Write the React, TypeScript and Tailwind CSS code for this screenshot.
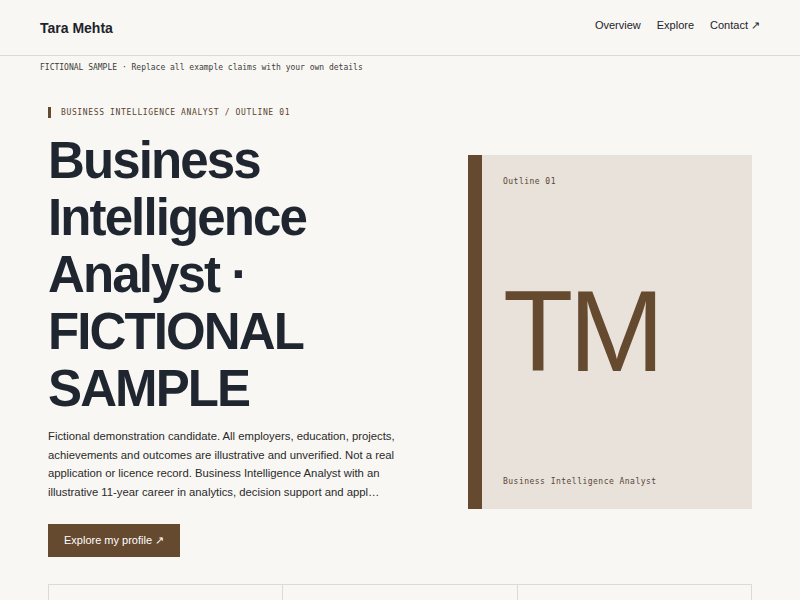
// Profil fictif — hero avec titre, carte monogramme et grille de repères.
const sans = 'font-["Liberation_Sans",Arial,sans-serif]'
const mono = 'font-["DejaVu_Sans_Mono","Liberation_Mono",monospace]'

function Header() {
  return (
    <header className="flex h-[56px] items-center justify-between border-b border-[#dcdad4] px-10 pb-[4px]">
      <span className="mt-[6px] text-[14px] font-bold text-[#1d232b]">Tara Mehta</span>
      <nav className="flex items-center gap-4 text-[11px] text-[#1d232b]">
        <a>Overview</a>
        <a>Explore</a>
        <a>Contact ↗</a>
      </nav>
    </header>
  )
}

function MonogramCard() {
  return (
    <div className="flex h-[354px] border-l-[14px] border-[#654a30] bg-[#e8e2db] pt-[22px] pb-[22px] pl-[21px]">
      <div className="flex flex-1 flex-col justify-between">
        <p className={`${mono} text-[8px] leading-[10px] tracking-[0.06em] text-[#5a4634]`}>Outline 01</p>
        <p className="text-[115px] leading-none tracking-[-0.04em] text-[#654a30]">TM</p>
        <p className={`${mono} text-[8px] leading-[10px] tracking-[0.06em] text-[#5a4634]`}>
          Business Intelligence Analyst
        </p>
      </div>
    </div>
  )
}

export default function App() {
  return (
    <div className={`min-h-screen bg-[#f8f7f3] ${sans}`}>
      <Header />
      <p className={`${mono} px-10 pt-[7px] text-[8px] leading-[10px] text-[#3c3c3c]`}>
        FICTIONAL SAMPLE · Replace all example claims with your own details
      </p>

      <main className="px-12 pt-[34px]">
        <section className="grid grid-cols-[372px_284px] items-center gap-12">
          <div>
            <p
              className={`${mono} border-l-[3px] border-[#654a30] pl-[10px] text-[8px] leading-[11px] tracking-[0.08em] text-[#5a4330]`}
            >
              BUSINESS INTELLIGENCE ANALYST / OUTLINE 01
            </p>
            <h1 className="mt-[14px] text-[51px] font-bold leading-[57px] tracking-[-0.037em] text-[#1f2630]">
              Business Intelligence Analyst · FICTIONAL SAMPLE
            </h1>
            <p className="mt-[10px] w-[358px] text-[11.3px] leading-[18.7px] text-[#2a2a2a]">
              Fictional demonstration candidate. All employers, education, projects, achievements and outcomes are
              illustrative and unverified. Not a real application or licence record. Business Intelligence Analyst
              with an illustrative 11-year career in analytics, decision support and appl…
            </p>
            <button type="button" className="mt-[22px] h-[33px] bg-[#654a30] px-4 text-[11px] text-white">
              Explore my profile ↗
            </button>
          </div>
          <MonogramCard />
        </section>

        <div className="mt-[27px] grid grid-cols-3 border-t border-l border-[#dcdad4]">
          <div className="h-[40px] border-r border-[#dcdad4]" />
          <div className="h-[40px] border-r border-[#dcdad4]" />
          <div className="h-[40px] border-r border-[#dcdad4]" />
        </div>
      </main>
    </div>
  )
}
